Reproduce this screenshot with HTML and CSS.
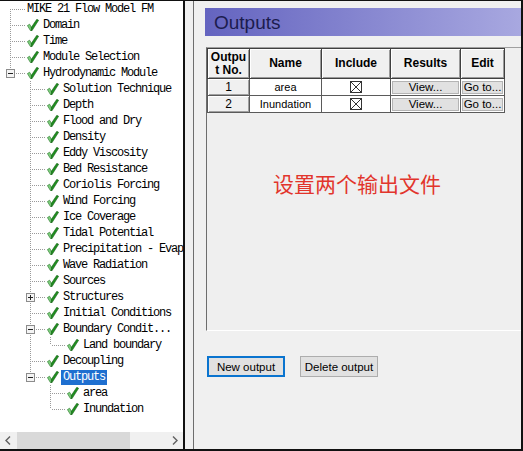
FILE: index.html
```html
<!DOCTYPE html>
<html>
<head>
<meta charset="utf-8">
<link rel="stylesheet" href="styles.css">
</head>
<body>
<svg class="defs" width="0" height="0">
  <symbol id="chk" viewBox="0 0 12 12">
    <path d="M0.4 6.6 L2.6 5.2 L4.4 8.2 L4.4 11.8 L3.6 11.8 Z" fill="#7fd07f" stroke="#1c6e1c" stroke-width="0.6"/>
    <path d="M4.4 8.2 L9.8 0.3 L11.6 1.3 L4.9 11.8 L4.4 11.8 Z" fill="#1f8f1f" stroke="#145c14" stroke-width="0.6"/>
  </symbol>
  <symbol id="minus" viewBox="0 0 9 9">
    <rect x="0.5" y="0.5" width="8" height="8" fill="#f4f4f4" stroke="#8c8c8c"/>
    <path d="M2 4.5 H7" stroke="#222" stroke-width="1"/>
  </symbol>
  <symbol id="plus" viewBox="0 0 9 9">
    <rect x="0.5" y="0.5" width="8" height="8" fill="#f4f4f4" stroke="#8c8c8c"/>
    <path d="M2 4.5 H7 M4.5 2 V7" stroke="#222" stroke-width="1"/>
  </symbol>
</svg>
<div class="window">
  <div class="tree-pane">
    <div class="tree">
      <div class="row"><span class="conn first"></span><span class="label root">MIKE 21 Flow Model FM</span></div>
      <div class="row"><span class="conn"></span><span class="chk"><svg><use href="#chk"/></svg></span><span class="label">Domain</span></div>
      <div class="row"><span class="conn"></span><span class="chk"><svg><use href="#chk"/></svg></span><span class="label">Time</span></div>
      <div class="row"><span class="conn"></span><span class="chk"><svg><use href="#chk"/></svg></span><span class="label">Module Selection</span></div>
      <div class="row"><span class="conn last"><svg class="box"><use href="#minus"/></svg></span><span class="chk"><svg><use href="#chk"/></svg></span><span class="label">Hydrodynamic Module</span></div>

      <div class="row"><span class="guide"></span><span class="conn"></span><span class="chk"><svg><use href="#chk"/></svg></span><span class="label">Solution Technique</span></div>
      <div class="row"><span class="guide"></span><span class="conn"></span><span class="chk"><svg><use href="#chk"/></svg></span><span class="label">Depth</span></div>
      <div class="row"><span class="guide"></span><span class="conn"></span><span class="chk"><svg><use href="#chk"/></svg></span><span class="label">Flood and Dry</span></div>
      <div class="row"><span class="guide"></span><span class="conn"></span><span class="chk"><svg><use href="#chk"/></svg></span><span class="label">Density</span></div>
      <div class="row"><span class="guide"></span><span class="conn"></span><span class="chk"><svg><use href="#chk"/></svg></span><span class="label">Eddy Viscosity</span></div>
      <div class="row"><span class="guide"></span><span class="conn"></span><span class="chk"><svg><use href="#chk"/></svg></span><span class="label">Bed Resistance</span></div>
      <div class="row"><span class="guide"></span><span class="conn"></span><span class="chk"><svg><use href="#chk"/></svg></span><span class="label">Coriolis Forcing</span></div>
      <div class="row"><span class="guide"></span><span class="conn"></span><span class="chk"><svg><use href="#chk"/></svg></span><span class="label">Wind Forcing</span></div>
      <div class="row"><span class="guide"></span><span class="conn"></span><span class="chk"><svg><use href="#chk"/></svg></span><span class="label">Ice Coverage</span></div>
      <div class="row"><span class="guide"></span><span class="conn"></span><span class="chk"><svg><use href="#chk"/></svg></span><span class="label">Tidal Potential</span></div>
      <div class="row"><span class="guide"></span><span class="conn"></span><span class="chk"><svg><use href="#chk"/></svg></span><span class="label">Precipitation - Evaporation</span></div>
      <div class="row"><span class="guide"></span><span class="conn"></span><span class="chk"><svg><use href="#chk"/></svg></span><span class="label">Wave Radiation</span></div>
      <div class="row"><span class="guide"></span><span class="conn"></span><span class="chk"><svg><use href="#chk"/></svg></span><span class="label">Sources</span></div>
      <div class="row"><span class="guide"></span><span class="conn"><svg class="box"><use href="#plus"/></svg></span><span class="chk"><svg><use href="#chk"/></svg></span><span class="label">Structures</span></div>
      <div class="row"><span class="guide"></span><span class="conn"></span><span class="chk"><svg><use href="#chk"/></svg></span><span class="label">Initial Conditions</span></div>
      <div class="row"><span class="guide"></span><span class="conn"><svg class="box"><use href="#minus"/></svg></span><span class="chk"><svg><use href="#chk"/></svg></span><span class="label">Boundary Condit...</span></div>
      <div class="row"><span class="guide"></span><span class="guide line"></span><span class="conn last"></span><span class="chk"><svg><use href="#chk"/></svg></span><span class="label">Land boundary</span></div>
      <div class="row"><span class="guide"></span><span class="conn"></span><span class="chk"><svg><use href="#chk"/></svg></span><span class="label">Decoupling</span></div>
      <div class="row"><span class="guide"></span><span class="conn last"><svg class="box"><use href="#minus"/></svg></span><span class="chk"><svg><use href="#chk"/></svg></span><span class="label selected">Outputs</span></div>
      <div class="row"><span class="guide"></span><span class="guide"></span><span class="conn"></span><span class="chk"><svg><use href="#chk"/></svg></span><span class="label">area</span></div>
      <div class="row"><span class="guide"></span><span class="guide"></span><span class="conn last"></span><span class="chk"><svg><use href="#chk"/></svg></span><span class="label">Inundation</span></div>
    </div>
    <div class="hscroll">
      <span class="sb-btn"><svg viewBox="0 0 17 17"><path d="M10 4.5 L6 8.5 L10 12.5" fill="none" stroke="#606060" stroke-width="1.4"/></svg></span>
      <span class="sb-thumb"></span>
      <span class="sb-track"></span>
      <span class="sb-btn"><svg viewBox="0 0 17 17"><path d="M7 4.5 L11 8.5 L7 12.5" fill="none" stroke="#606060" stroke-width="1.4"/></svg></span>
    </div>
  </div>
  <div class="splitter"></div>
  <div class="main">
    <div class="title">Outputs</div>
    <div class="grid">
      <table class="outputs">
        <colgroup>
          <col class="c-no"><col class="c-name"><col class="c-inc"><col class="c-res"><col class="c-edit">
        </colgroup>
        <tr class="hdr">
          <th>Outpu<br>t No.</th><th>Name</th><th>Include</th><th>Results</th><th>Edit</th>
        </tr>
        <tr class="data">
          <td class="num">1</td>
          <td>area</td>
          <td><svg class="xbox" viewBox="0 0 12 12"><rect x="0.5" y="0.5" width="11" height="11" fill="#fff" stroke="#333"/><path d="M1 1 L11 11 M11 1 L1 11" stroke="#333" stroke-width="1"/></svg></td>
          <td class="bcell"><span class="cellbtn">View...</span></td>
          <td class="bcell"><span class="cellbtn">Go to...</span></td>
        </tr>
        <tr class="data">
          <td class="num">2</td>
          <td>Inundation</td>
          <td><svg class="xbox" viewBox="0 0 12 12"><rect x="0.5" y="0.5" width="11" height="11" fill="#fff" stroke="#333"/><path d="M1 1 L11 11 M11 1 L1 11" stroke="#333" stroke-width="1"/></svg></td>
          <td class="bcell"><span class="cellbtn">View...</span></td>
          <td class="bcell"><span class="cellbtn">Go to...</span></td>
        </tr>
      </table>
      <div class="note">设置两个输出文件</div>
    </div>
    <div class="actions">
      <button class="btn default">New output</button>
      <button class="btn">Delete output</button>
    </div>
  </div>
</div>
</body>
</html>
```
FILE: styles.css
```css
html, body {
  margin: 0;
  padding: 0;
  background: #f0f0f0;
}
.defs {
  position: absolute;
  width: 0;
  height: 0;
  overflow: hidden;
}
.window {
  width: 523px;
  height: 451px;
  box-sizing: border-box;
  border-top: 1px solid #111;
  border-right: 2px solid #111;
  border-bottom: 2px solid #111;
  display: flex;
  background: #f0f0f0;
  overflow: hidden;
}

/* ---------- tree pane ---------- */
.tree-pane {
  width: 183px;
  border-right: 2px solid #111;
  background: #fff;
  display: flex;
  flex-direction: column;
  flex: none;
}
.tree {
  flex: 1;
  overflow: hidden;
  font-family: "Liberation Mono", "DejaVu Sans Mono", monospace;
  font-size: 12px;
  letter-spacing: -1.2px;
  color: #000;
}
.row {
  height: 16px;
  display: flex;
  align-items: center;
  white-space: nowrap;
}
.guide {
  width: 20px;
  height: 16px;
  flex: none;
}
.guide.line {
  background-image: repeating-linear-gradient(to bottom, #9a9a9a 0 1px, transparent 1px 2px);
  background-size: 1px 16px;
  background-position: 10px 0;
  background-repeat: no-repeat;
}
.conn {
  width: 26px;
  height: 16px;
  flex: none;
  position: relative;
}
.conn::before {
  content: "";
  position: absolute;
  left: 10px;
  top: 0;
  width: 1px;
  height: 16px;
  background-image: repeating-linear-gradient(to bottom, #9a9a9a 0 1px, transparent 1px 2px);
}
.conn.first::before {
  top: 8px;
  height: 8px;
}
.conn.last::before {
  height: 8px;
}
.conn::after {
  content: "";
  position: absolute;
  left: 11px;
  top: 8px;
  width: 15px;
  height: 1px;
  background-image: repeating-linear-gradient(to right, transparent 0 1px, #9a9a9a 1px 2px);
}
.box {
  position: absolute;
  left: 6px;
  top: 4px;
  width: 9px;
  height: 9px;
  z-index: 1;
}
.chk {
  width: 15px;
  height: 16px;
  flex: none;
  display: flex;
  align-items: center;
}
.chk svg {
  width: 12px;
  height: 12px;
  margin-left: 1px;
}
.label {
  padding: 0 2px;
  height: 15px;
  line-height: 15px;
}
.label.root {
  padding-left: 1px;
}
.label.selected {
  background: #1e6fd0;
  color: #fff;
}
.hscroll {
  height: 17px;
  display: flex;
  background: #f0f0f0;
  flex: none;
}
.sb-btn {
  width: 17px;
  height: 17px;
  flex: none;
}
.sb-btn svg {
  width: 17px;
  height: 17px;
  display: block;
}
.sb-thumb {
  width: 113px;
  background: #d9d9d9;
  flex: none;
}
.sb-track {
  flex: 1;
}

/* ---------- splitter ---------- */
.splitter {
  width: 8px;
  flex: none;
  border-right: 1px solid #6d6d6d;
  background: #f0f0f0;
}

/* ---------- main pane ---------- */
.main {
  flex: 1;
  padding: 7px 0 0 11px;
  display: flex;
  flex-direction: column;
}
.title {
  height: 28px;
  line-height: 29px;
  padding-left: 9px;
  background: linear-gradient(to right, #6464c0, #a8a8e0);
  font-family: "Liberation Sans", Arial, sans-serif;
  font-size: 19px;
  color: #1c1c4e;
}
.grid {
  margin: 11px 0 0 1px;
  height: 284px;
  box-sizing: border-box;
  border-left: 1px solid #6d6d6d;
  border-top: 1px solid #a0a0a0;
  border-bottom: 1px solid #fff;
  background: #efefef;
}
.outputs {
  border-collapse: collapse;
  table-layout: fixed;
  font-family: "Liberation Sans", Arial, sans-serif;
  font-size: 11px;
  color: #000;
}
.c-no { width: 42px; }
.c-name { width: 72px; }
.c-inc { width: 69px; }
.c-res { width: 70px; }
.c-edit { width: 44px; }
.outputs th {
  height: 29px;
  padding: 0;
  background: #f0f0f0;
  border: 1px solid #404040;
  box-shadow: inset 1px 1px 0 #fff, inset -1px -1px 0 #9a9a9a;
  font-size: 12px;
  font-weight: bold;
  line-height: 13px;
  text-align: center;
}
.outputs td {
  height: 14px;
  padding: 0;
  background: #fff;
  border: 1px solid #5a5a5a;
  text-align: center;
  line-height: 13px;
  vertical-align: middle;
  white-space: nowrap;
}
.outputs td.num {
  background: #f0f0f0;
  box-shadow: inset 1px 1px 0 #fff, inset -1px -1px 0 #a0a0a0;
  font-size: 12px;
}
.xbox {
  width: 12px;
  height: 12px;
  display: block;
  margin: 0 auto;
}
.outputs td.bcell {
  padding: 1px;
}
.cellbtn {
  display: block;
  height: 11px;
  line-height: 11px;
  background: #e1e1e1;
  border: 1px solid #b4b4b4;
  font-size: 11.5px;
  white-space: nowrap;
  overflow: hidden;
}
.note {
  margin: 57px 0 0 66px;
  font-family: "Noto Sans CJK SC", sans-serif;
  font-size: 21px;
  line-height: 26px;
  color: #e2352c;
}
.actions {
  margin: 25px 0 0 2px;
  display: flex;
  gap: 15px;
}
.btn {
  width: 78px;
  height: 21px;
  padding: 0;
  box-sizing: border-box;
  background: #e1e1e1;
  border: 1px solid #adadad;
  font-family: "Liberation Sans", Arial, sans-serif;
  font-size: 11.5px;
  color: #000;
}
.btn.default {
  border: 2px solid #0a74cf;
}
```
